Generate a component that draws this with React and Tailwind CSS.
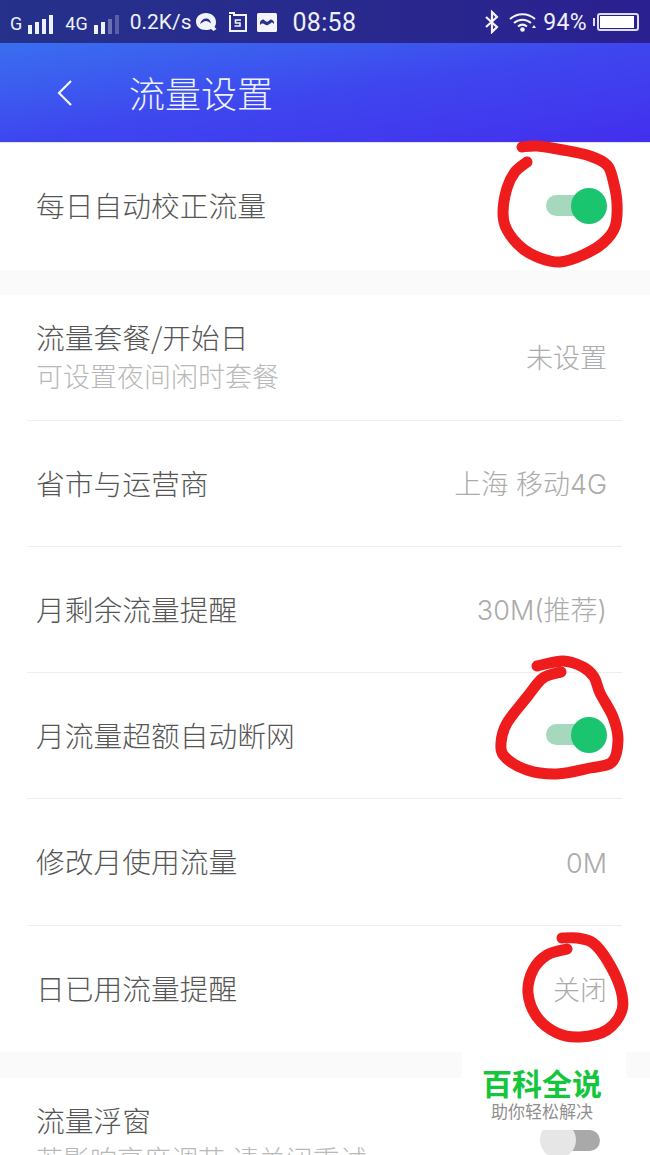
const FONT = { fontFamily: '"Noto Sans CJK SC", sans-serif' };
const VALUE_FONT = { fontFamily: 'Inter, "Noto Sans CJK SC", sans-serif' };

function smooth(points) {
  let d = `M${points[0][0]} ${points[0][1]}`;
  for (let i = 0; i < points.length - 1; i++) {
    const p0 = points[Math.max(i - 1, 0)];
    const p1 = points[i];
    const p2 = points[i + 1];
    const p3 = points[Math.min(i + 2, points.length - 1)];
    const c1 = [p1[0] + (p2[0] - p0[0]) / 6, p1[1] + (p2[1] - p0[1]) / 6];
    const c2 = [p2[0] - (p3[0] - p1[0]) / 6, p2[1] - (p3[1] - p1[1]) / 6];
    d += ` C${c1[0]} ${c1[1]} ${c2[0]} ${c2[1]} ${p2[0]} ${p2[1]}`;
  }
  return d;
}

const S1 = [[522,147],[537,146],[563,150],[590,156],[607,165],[613,180],[617,203],[615,227],[603,243],[583,255],[560,262],[540,258],[522,248],[507,230],[503,213],[507,188],[515,172],[527,162]];
const S2 = [[537,666],[563,661],[583,667],[594,677],[600,693],[613,717],[618,740],[612,762],[590,768],[557,774],[527,770],[505,757],[501,743],[507,723],[527,697],[543,678],[561,672]];
const S3 = [[567,949],[547,955],[533,970],[528,993],[537,1017],[557,1033],[580,1037],[607,1030],[622,1010],[620,987],[607,960],[593,943],[577,938],[562,938]];

function Bars({ levels }) {
  return (
    <div className="flex items-end gap-[3px] h-[19px]">
      {levels.map((l, i) => (
        <span key={i} className="w-[4px] bg-[#eef0fa]" style={{ height: l.h, opacity: l.o }} />
      ))}
    </div>
  );
}

function StatusBar() {
  const latin = { fontFamily: 'Roboto, "Liberation Sans", sans-serif' };
  return (
    <div
      className="h-[43px] flex items-center bg-gradient-to-r from-[#25318a] to-[#2b2090] text-[#eef0fa] pl-[10px] pt-[3px]"
      style={latin}
    >
      <span className="text-[18px] leading-none mt-[2px]">G</span>
      <div className="ml-[6px] mt-[2px]">
        <Bars levels={[{h:9,o:1},{h:12,o:1},{h:15,o:1},{h:19,o:1}]} />
      </div>
      <span className="ml-[12px] text-[18px] leading-none mt-[2px]">4G</span>
      <div className="ml-[6px] mt-[2px]">
        <Bars levels={[{h:9,o:1},{h:12,o:1},{h:15,o:0.35},{h:19,o:0.25}]} />
      </div>
      <span className="ml-[11px] text-[21px] leading-none mt-[-2px]">0.2K/s</span>
      <svg className="ml-[5px] mt-[-2px]" width="21" height="18" viewBox="0 0 21 18">
        <path d="M10 0c6 0 10 4 10 9 0 2-.5 3.500-1.500 5l2 2-3 2-2.500-2c-1.500.7-3 1-5 1C4 17 0 13.500 0 8.500 0 4 4 0 10 0z" fill="#f2f3fb" />
        <path d="M4 11c1-4 4-6 7-5.500 2 .3 3.500 2 4 5-2-1.500-3-2.500-5-2.500-2.500 0-4 2-6 3z" fill="#27308a" />
      </svg>
      <svg className="ml-[11px] mt-[-2px]" width="19" height="20" viewBox="0 0 19 20">
        <path d="M1 1h5v2h12v16H2V3" fill="none" stroke="#f2f3fb" strokeWidth="2" />
        <path d="M13 8H7.500v3H12v3H6.500" fill="none" stroke="#f2f3fb" strokeWidth="1.600" />
      </svg>
      <svg className="ml-[10px] mt-[-2px]" width="20" height="19" viewBox="0 0 20 19">
        <rect width="20" height="19" rx="1.500" fill="#f4f5fc" />
        <path d="M3 9c1-2 3-3 4-2l3 2 3-2c1-1 3 0 4 2v2c-1-1-2-2-3-1l-3 2c-2 1-3-1-4-1-2-1-3 0-4 1z" fill="#27308a" />
      </svg>
      <span className="ml-[15px] text-[25px] leading-none tracking-[0.3px] mt-[-2px]">08:58</span>
      <svg className="ml-[129px] mt-[-2px]" width="14" height="24" viewBox="0 0 14 24">
        <path d="M1 7l11 10-5 5V2l5 5L1 17" fill="none" stroke="#f2f3fb" strokeWidth="2.200" />
      </svg>
      <svg className="ml-[10px] mt-[-2px]" width="28" height="19" viewBox="0 0 28 19">
        <path d="M1 6C8-.5 19-.5 26 6M5 10c5-4.500 12-4.500 17 0M9 13.500c3-2.500 6-2.500 9 0" fill="none" stroke="#f2f3fb" strokeWidth="2" />
        <circle cx="13.500" cy="16.500" r="2.300" fill="#f2f3fb" />
        <path d="M23 15l2-3 2 3z" fill="#f2f3fb" />
      </svg>
      <span className="ml-[6px] text-[23px] leading-none tracking-[0.3px] mt-[-2px]">94%</span>
      <div className="ml-[6px] w-[2px] h-[8px] bg-[#dfe0f3] mt-[-2px]" />
      <div className="ml-[2px] w-[42px] h-[18px] border-2 border-[#dcdcf2] rounded-[3px] p-[1px] mt-[-2px]">
        <div className="h-full w-[94%] bg-white" />
      </div>
    </div>
  );
}

function Header() {
  return (
    <div className="h-[100px] flex items-center bg-gradient-to-br from-[#3a6ef0] via-[#3e46ee] to-[#432eee] text-white border-b border-[#dfe3f5]">
      <svg className="ml-[56px]" width="18" height="28" viewBox="0 0 18 28">
        <path d="M15 2L3 14l12 12" fill="none" stroke="#f4f6ff" strokeWidth="2.200" />
      </svg>
      <span className="ml-[55px] mt-[-2px] text-[36px] leading-none text-[#eef1ff] font-light" style={FONT}>
        流量设置
      </span>
    </div>
  );
}

function Toggle({ on }) {
  if (on) {
    return (
      <div className="flex items-center w-[61px]">
        <div className="w-[50px] h-[21px] rounded-full bg-[#a5d8bd]" />
        <div className="w-[36px] h-[36px] rounded-full bg-[#1bc46f] ml-[-25px]" />
      </div>
    );
  }
  return (
    <div className="flex items-center w-[60px]">
      <div className="w-[36px] h-[36px] rounded-full bg-[#e6e6e6] relative z-10" />
      <div className="w-[42px] h-[21px] rounded-r-full bg-[#a9a9a9] ml-[-18px]" />
    </div>
  );
}

function Row({ title, sub, value, toggle, last, tall }) {
  return (
    <div className={`flex items-center justify-between ${tall ? "h-[127px]" : "h-[126px]"} pl-[9px] pr-[15px] pb-[2px] ${last ? "" : "border-b border-[#eeeeee]"}`}>
      <div className="flex flex-col">
        <span className="text-[28.75px] leading-[38px] text-[#565656] font-light whitespace-nowrap">{title}</span>
        {sub && <span className="text-[27px] leading-[38px] mt-[1px] text-[#b9b9b9] font-light whitespace-nowrap">{sub}</span>}
      </div>
      {value && <span className="text-[27px] leading-none mt-[4px] text-[#ababab] font-light whitespace-nowrap" style={VALUE_FONT}>{value}</span>}
      {toggle !== undefined && <Toggle on={toggle} />}
    </div>
  );
}

export default function App() {
  return (
    <div className="relative w-[650px] h-[1155px] overflow-hidden bg-white" style={FONT}>
      <StatusBar />
      <Header />

      <div className="flex items-center justify-between h-[127px] pl-[36px] pr-[43px] pb-[2px]">
        <span className="text-[28.75px] leading-none text-[#565656] font-light whitespace-nowrap">每日自动校正流量</span>
        <Toggle on />
      </div>
      <div className="h-[25px] bg-[#fafafa]" />

      <div className="pl-[27px] pr-[28px]">
        <Row title="流量套餐/开始日" sub="可设置夜间闲时套餐" value="未设置" />
        <Row title="省市与运营商" value="上海 移动4G" />
        <Row title="月剩余流量提醒" value="30M(推荐)" />
        <Row title="月流量超额自动断网" toggle={true} />
        <Row title="修改月使用流量" value="0M" tall />
        <Row title="日已用流量提醒" value="关闭" last />
      </div>
      <div className="h-[26px] bg-[#fafafa]" />

      <div className="flex items-start justify-between pl-[36px] pr-[50px] pt-[23px]">
        <div className="flex flex-col">
          <span className="text-[28.75px] leading-[38px] text-[#565656] font-light">流量浮窗</span>
          <span className="text-[27px] leading-[38px] mt-[1px] text-[#b9b9b9] font-light whitespace-nowrap">若影响亮度调节,请关闭重试</span>
        </div>
        <div className="mt-[21px]">
          <Toggle on={false} />
        </div>
      </div>

      <div className="absolute left-[462px] top-[1050px] w-[164px] h-[80px] bg-white flex flex-col items-center pt-[14px] pr-[4px] z-20">
        <span className="text-[30px] leading-[36px] font-bold text-[#14c63c]">百科全说</span>
        <span className="text-[17px] leading-[20px] text-[#8f8f8f] mt-[1px]">助你轻松解决</span>
      </div>

      <svg className="absolute left-0 top-0 z-30" width="650" height="1155" viewBox="0 0 650 1155" fill="none">
        {[S1, S2, S3].map((s, i) => (
          <path key={i} d={smooth(s)} stroke="#ee1c1c" strokeWidth="11" strokeLinecap="round" strokeLinejoin="round" />
        ))}
      </svg>
    </div>
  );
}
